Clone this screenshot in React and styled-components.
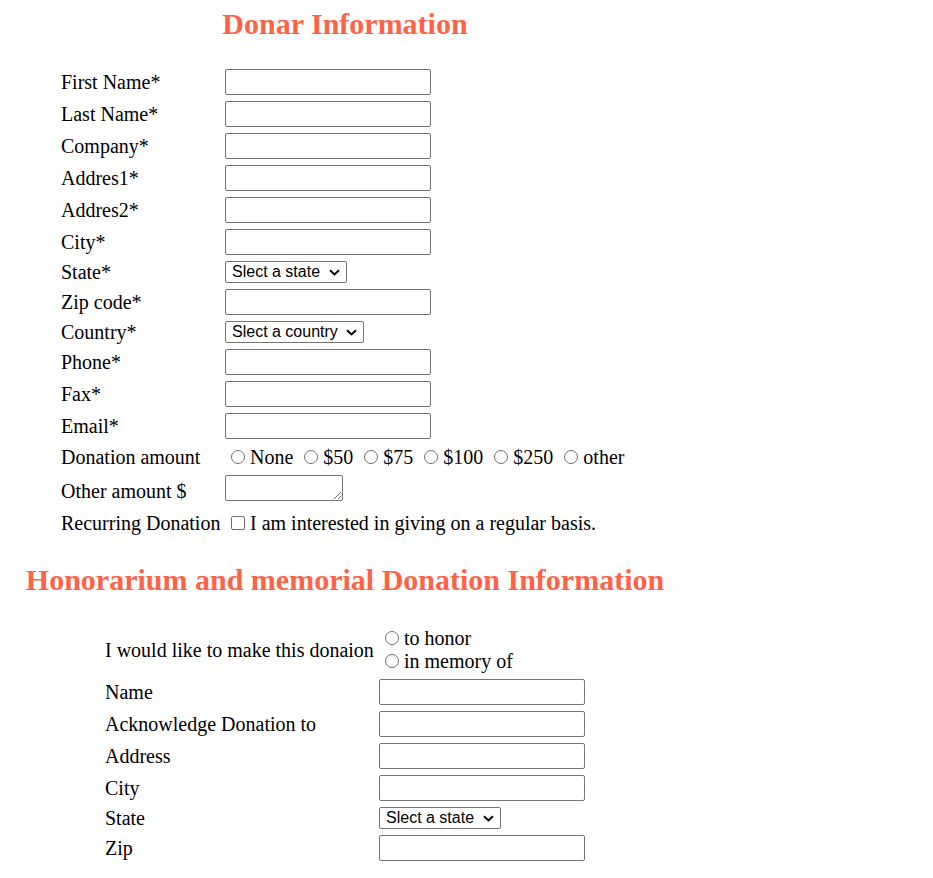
import React from "react";
import styled, { createGlobalStyle } from "styled-components";

const GlobalStyle = createGlobalStyle`
  body {
    margin: 0;
    background: #ffffff;
    color: #000000;
    font-family: "Liberation Serif", "Times New Roman", serif;
  }
`;

const states = ["Slect a state", "Alabama", "Alaska", "Arizona", "California"];
const countries = ["Slect a country", "United States", "Canada", "Mexico"];
const amounts = ["None", "$50", "$75", "$100", "$250", "other"];

const donorFields = [
  { label: "First Name*" },
  { label: "Last Name*" },
  { label: "Company*" },
  { label: "Addres1*" },
  { label: "Addres2*" },
  { label: "City*" },
  { label: "State*", options: states },
  { label: "Zip code*" },
  { label: "Country*", options: countries },
  { label: "Phone*" },
  { label: "Fax*" },
  { label: "Email*" },
];

const honorFields = [
  { label: "Name" },
  { label: "Acknowledge Donation to" },
  { label: "Address" },
  { label: "City" },
  { label: "State", options: states },
  { label: "Zip" },
];

const Chevron = () => (
  <ChevronIcon width="11" height="7" viewBox="0 0 11 7">
    <path d="M1 1.2 L5.5 5.4 L10 1.2" fill="none" stroke="#000" strokeWidth="2" />
  </ChevronIcon>
);

const renderField = (field, i) => (
  <React.Fragment key={i}>
    <Label>{field.label}</Label>
    <Field>
      {field.options ? (
        <SelectBox>
          <Select defaultValue={field.options[0]}>
            {field.options.map(o => (
              <option key={o}>{o}</option>
            ))}
          </Select>
          <Chevron />
        </SelectBox>
      ) : (
        <TextInput type="text" />
      )}
    </Field>
  </React.Fragment>
);

const App = () => {
  return (
    <Page>
      <GlobalStyle />
      <Title>Donar Information</Title>
      <FormGrid $indent={53} $labelWidth={164}>
        {donorFields.map(renderField)}

        <Label>Donation amount</Label>
        <Field $minHeight={24}>
          {amounts.map(a => (
            <Choice key={a}>
              <Radio type="radio" name="amount" />
              {a}{" "}
            </Choice>
          ))}
        </Field>

        <Label>Other amount $</Label>
        <Field>
          <AmountArea />
        </Field>

        <Label>Recurring Donation</Label>
        <Field>
          <Choice>
            <Check type="checkbox" />I am interested in giving on a regular basis.
          </Choice>
        </Field>
      </FormGrid>

      <Title $gapTop={29}>Honorarium and memorial Donation Information</Title>
      <FormGrid $indent={97} $labelWidth={274}>
        <Label>I would like to make this donaion</Label>
        <OptionStack>
          <Choice>
            <Radio type="radio" name="kind" />to honor
          </Choice>
          <Choice>
            <Radio type="radio" name="kind" />in memory of
          </Choice>
        </OptionStack>
        {honorFields.map(renderField)}
      </FormGrid>
    </Page>
  );
};

export default App;

const Page = styled.div`
  width: 674px;
  padding: 7px 0 17px 8px;
`;

const Title = styled.h1`
  margin: ${p => p.$gapTop || 0}px 0 ${p => (p.$gapTop ? 30 : 28)}px;
  font-size: 30px;
  line-height: 34px;
  font-weight: bold;
  color: #ff6347;
  text-align: center;
  white-space: nowrap;
`;

const FormGrid = styled.div`
  display: grid;
  grid-template-columns: ${p => p.$labelWidth}px auto;
  row-gap: 6px;
  align-items: center;
  margin-left: ${p => p.$indent}px;
  font-size: 20px;
`;

const Label = styled.div`
  line-height: 22px;
  white-space: nowrap;
`;

const Field = styled.div`
  line-height: 22px;
  white-space: nowrap;
  display: flex;
  align-items: center;
  min-height: ${p => p.$minHeight || 22}px;
`;

const OptionStack = styled.div`
  display: flex;
  flex-direction: column;
  align-items: flex-start;
  line-height: 23px;
`;

const Choice = styled.label`
  display: inline-block;
  white-space: pre;
`;

const TextInput = styled.input`
  box-sizing: border-box;
  width: 206px;
  height: 26px;
  margin: 0;
  padding: 1px 3px;
  border: 1px solid #767676;
  border-radius: 2px;
  font-family: "Liberation Sans", Arial, sans-serif;
  font-size: 13px;
  background: #ffffff;
`;

const SelectBox = styled.span`
  position: relative;
  display: inline-flex;
`;

const Select = styled.select`
  appearance: none;
  box-sizing: border-box;
  height: 22px;
  margin: 0;
  padding: 0 25px 0 6px;
  border: 1px solid #767676;
  border-radius: 2px;
  font-family: "Liberation Sans", Arial, sans-serif;
  font-size: 16px;
  line-height: 20px;
  color: #000000;
  background: #ffffff;
`;

const ChevronIcon = styled.svg`
  position: absolute;
  right: 7px;
  top: 8px;
  pointer-events: none;
`;

const AmountArea = styled.textarea`
  box-sizing: border-box;
  width: 118px;
  height: 26px;
  margin: 0 0 5px;
  padding: 2px;
  border: 1px solid #767676;
  border-radius: 2px;
  resize: both;
  font-family: "Liberation Mono", monospace;
  font-size: 13px;
`;

const Radio = styled.input`
  appearance: none;
  box-sizing: border-box;
  width: 14px;
  height: 14px;
  margin: 3px 5px 0 6px;
  border: 1px solid #6f6f6f;
  border-radius: 50%;
  background: #ffffff;
  vertical-align: baseline;
`;

const Check = styled.input`
  appearance: none;
  box-sizing: border-box;
  width: 14px;
  height: 14px;
  margin: 3px 5px 0 6px;
  border: 1px solid #6f6f6f;
  border-radius: 2px;
  background: #ffffff;
  vertical-align: baseline;
`;
